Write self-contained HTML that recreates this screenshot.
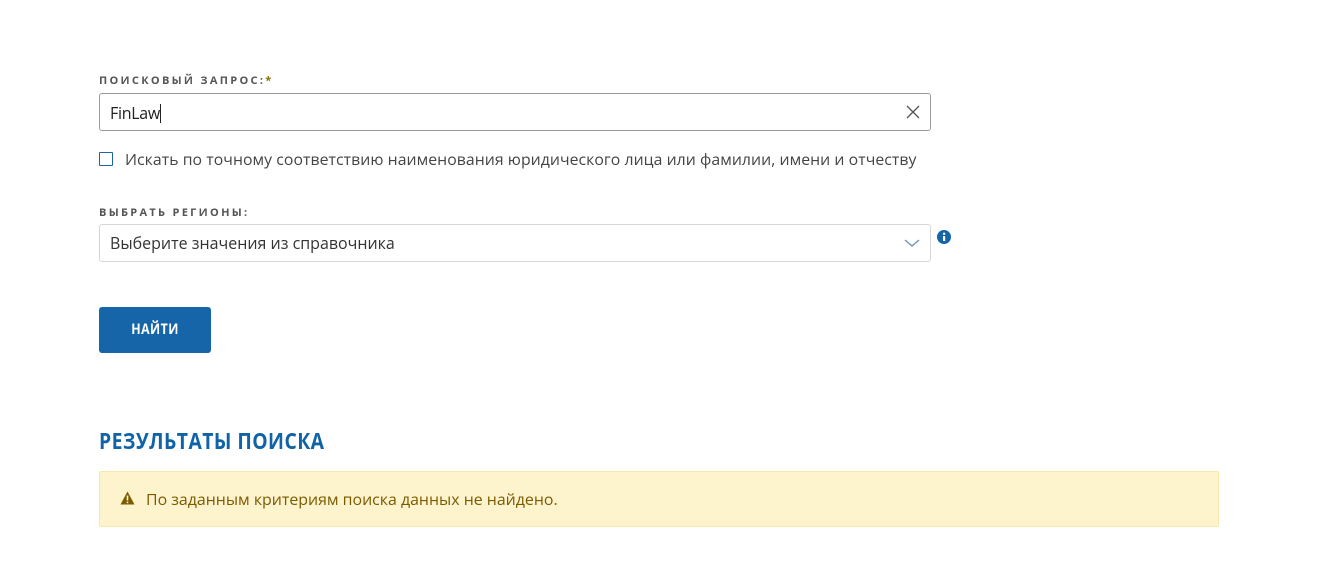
<!DOCTYPE html>
<html><head><meta charset="utf-8"><style>
body{margin:0;width:1323px;height:574px;background:#fff;font-family:"Open Sans","Liberation Sans","DejaVu Sans",sans-serif;position:relative;overflow:hidden}
.abs{position:absolute}
.lbl{font-size:11px;font-weight:bold;letter-spacing:2.3px;color:#555;}
.box{border:1px solid #bdbdbd;border-radius:3px;box-sizing:border-box;background:#fff}
</style></head><body>
<div class="abs lbl" style="left:99px;top:73px">ПОИСКОВЫЙ ЗАПРОС:<span style="color:#8a6d00">*</span></div>
<div class="abs box" style="left:99px;top:93px;width:832px;height:38px;border-color:#9a9a9a"></div>
<div class="abs" style="left:110px;top:102px;font-size:16px;color:#222;letter-spacing:-0.3px">FinLaw<span style="display:inline-block;width:1px;height:19px;background:#222;vertical-align:-4px"></span></div>
<svg class="abs" style="left:906px;top:105px" width="14" height="14"><path d="M1 1L13 13M13 1L1 13" stroke="#555" stroke-width="1.3"/></svg>
<div class="abs" style="left:99px;top:152px;width:14px;height:14px;border:1px solid #1d64a6;box-sizing:border-box;border-radius:1px"></div>
<div class="abs" style="left:125px;top:148px;font-size:15.8px;color:#444;letter-spacing:0.05px">Искать по точному соответствию наименования юридического лица или фамилии, имени и отчеству</div>
<div class="abs lbl" style="left:99px;top:205px">ВЫБРАТЬ РЕГИОНЫ:</div>
<div class="abs box" style="left:99px;top:224px;width:832px;height:38px;border-color:#d6d6d6"></div>
<div class="abs" style="left:110px;top:232px;font-size:16px;color:#333">Выберите значения из справочника</div>
<svg class="abs" style="left:904px;top:238px" width="16" height="10"><path d="M1 2L8 8L15 2" stroke="#6a8fb5" stroke-width="1.3" fill="none"/></svg>
<svg class="abs" style="left:937px;top:230px" width="14" height="14"><circle cx="7" cy="7" r="7" fill="#1565a8"/><rect x="6" y="6" width="2.2" height="5" fill="#fff"/><circle cx="7.1" cy="3.8" r="1.2" fill="#fff"/></svg>
<div class="abs" style="left:99px;top:307px;width:112px;height:46px;background:#1565a8;border-radius:3px;"></div>
<div class="abs" style="left:99px;top:307px;width:112px;height:46px;color:#fff;font-weight:bold;font-size:14px;letter-spacing:0.5px;text-align:center;line-height:46px;transform:scaleX(0.88)">НАЙТИ</div>
<div class="abs" style="left:99px;top:426px;font-weight:bold;font-size:22px;color:#1163a8;letter-spacing:0.5px;transform:scaleX(0.88);transform-origin:0 0">РЕЗУЛЬТАТЫ ПОИСКА</div>
<div class="abs" style="left:99px;top:471px;width:1120px;height:56px;background:#fdf3cc;border:1px solid #f8e8ae;box-sizing:border-box;border-radius:2px"></div>
<svg class="abs" style="left:120px;top:491px" width="15" height="14"><path d="M7.5 0.5L14.5 13.5H0.5Z" fill="#7a5b00"/><rect x="6.7" y="4.5" width="1.6" height="5" fill="#fdf3cc"/><rect x="6.7" y="10.6" width="1.6" height="1.6" fill="#fdf3cc"/></svg>
<div class="abs" style="left:146px;top:488px;font-size:15.9px;color:#7a5b00">По заданным критериям поиска данных не найдено.</div>
</body></html>
